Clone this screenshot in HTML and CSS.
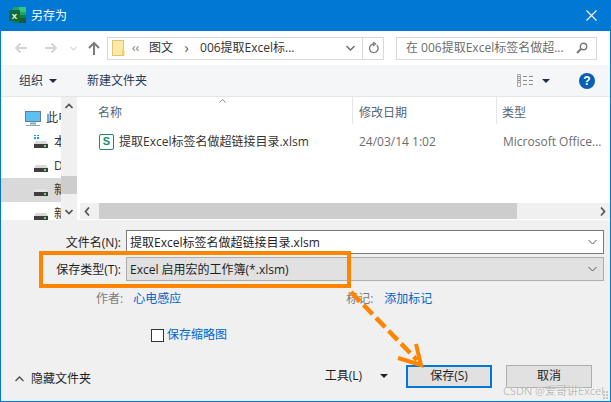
FILE: index.html
```html
<!DOCTYPE html>
<html lang="zh">
<head>
<meta charset="utf-8">
<title>另存为</title>
<link rel="stylesheet" href="styles.css">
</head>
<body>
<div class="window">
  <header class="titlebar">
    <svg class="xl" width="17" height="17" viewBox="0 0 17 17"><rect x="4" y="0" width="13" height="16" rx="1" fill="#21a366"/><rect x="10" y="0" width="7" height="5" fill="#33c481"/><rect x="4" y="8" width="13" height="8" fill="#107c41"/><rect x="10" y="11" width="7" height="5" fill="#185c37"/><rect x="0" y="3" width="11" height="11" rx="1" fill="#0f6b3a"/><text x="5.5" y="12" class="xl-x">X</text></svg>
    <span class="title">另存为</span>
    <svg class="close" width="11" height="11" viewBox="0 0 11 11"><path d="M.5.5l10 10M10.500.5l-10 10" stroke="#fff" stroke-width="1.100" fill="none"/></svg>
  </header>
  <nav class="navbar">
    <svg class="nav-ico" width="14" height="12" viewBox="0 0 14 12"><path d="M13 6H2M6.500 1.500L2 6l4.500 4.500" stroke="#d6d6d6" stroke-width="2" fill="none"/></svg>
    <svg class="nav-ico fwd" width="14" height="12" viewBox="0 0 14 12"><path d="M1 6h11M7.500 1.500L12 6l-4.500 4.500" stroke="#d6d6d6" stroke-width="2" fill="none"/></svg>
    <svg class="nav-ico dn" width="7" height="5" viewBox="0 0 7 5"><path d="M.5 1l3 3 3-3" stroke="#d6d6d6" stroke-width="1.200" fill="none"/></svg>
    <svg class="nav-ico up" width="12" height="14" viewBox="0 0 12 14"><path d="M6 14V2M1 7l5-5 5 5" stroke="#7d7d7d" stroke-width="2" fill="none"/></svg>
    <div class="address">
      <svg class="folder" width="13" height="16" viewBox="0 0 13 16"><rect x=".5" y=".5" width="11" height="15" fill="#ffe9a3" stroke="#e3c36f"/><rect x="10" y="10" width="2.500" height="5.500" fill="#f2cf72"/></svg>
      <span class="crumb-more">‹‹</span>
      <span class="crumb">图文</span>
      <span class="crumb-sep">›</span>
      <span class="crumb">006提取Excel标...</span>
      <svg class="addr-dd" width="9" height="6" viewBox="0 0 9 6"><path d="M.5 1l4 4 4-4" stroke="#666" stroke-width="1.300" fill="none"/></svg>
      <span class="refresh"><svg width="11" height="12" viewBox="0 0 11 12"><path d="M8.800 3.200a4.300 4.300 0 1 1-2.800-1.200M5 0l2.500 2L5 4" stroke="#777" stroke-width="1.300" fill="none"/></svg></span>
    </div>
    <div class="search">
      <span class="search-text">在 006提取Excel标签名做超...</span>
      <svg width="12" height="12" viewBox="0 0 12 12"><circle cx="7.500" cy="4.500" r="3.200" stroke="#777" stroke-width="1.400" fill="none"/><path d="M5 7l-4 4" stroke="#777" stroke-width="2"/></svg>
    </div>
  </nav>
  <div class="toolbar">
    <span class="tool-label">组织</span><i class="caret"></i>
    <span class="tool-label newfolder">新建文件夹</span>
    <span class="spacer"></span>
    <svg width="17" height="13" viewBox="0 0 17 13"><path d="M.5.500h3v12h-3zM.5 4.500h3M.5 8.500h3" stroke="#a9a9a9" fill="none"/><path d="M1 2.500h2" stroke="#6a8fc0"/><path d="M1 6.500h2" stroke="#c06a6a"/><path d="M6 2.500h4M12 2.500h4M6 6.500h4M12 6.500h4M6 10.500h4M12 10.500h4" stroke="#8d8d8d"/></svg>
    <i class="caret view-caret"></i>
    <span class="help">?</span>
  </div>
  <main class="main">
    <aside class="sidebar">
      <div class="tree">
        <div class="tree-row pc">
          <svg class="pc-ico" width="16" height="15" viewBox="0 0 16 15"><rect x=".5" y=".5" width="15" height="10" fill="#5cc0f0" stroke="#5d7f98"/><path d="M5 12.500h6" stroke="#8aa" stroke-width="2"/><path d="M1 14.500h14" stroke="#8ea3b3"/></svg>
          <span>此电脑</span>
        </div>
        <div class="tree-row drive"><svg class="drv-win" width="14" height="14" viewBox="0 0 14 14"><path d="M1 0h2v2H1zM4 0h2v2H4zM1 3h2v2H1zM4 3h2v2H4z" fill="#1e9de8" transform="translate(-1 -1)"/><path d="M2 6h10l2 3H0z" fill="#d9d9d9"/><rect y="9" width="14" height="4" fill="#3f3f3f"/><rect x="10" y="10" width="2" height="2" fill="#5fe05f"/></svg><span>本地磁盘</span></div>
        <div class="tree-row drive"><svg class="drv" width="14" height="8" viewBox="0 0 14 8"><path d="M2 0h10l2 3H0z" fill="#d9d9d9"/><rect y="3" width="14" height="4" fill="#3f3f3f"/><rect x="10" y="4" width="2" height="2" fill="#5fe05f"/></svg><span>D盘</span></div>
        <div class="tree-row drive selected"><svg class="drv" width="14" height="8" viewBox="0 0 14 8"><path d="M2 0h10l2 3H0z" fill="#e4e4e4"/><rect y="3" width="14" height="4" fill="#3f3f3f"/><rect x="10" y="4" width="2" height="2" fill="#5fe05f"/></svg><span>新加卷</span></div>
        <div class="tree-row drive"><svg class="drv" width="14" height="8" viewBox="0 0 14 8"><path d="M2 0h10l2 3H0z" fill="#d9d9d9"/><rect y="3" width="14" height="4" fill="#3f3f3f"/><rect x="10" y="4" width="2" height="2" fill="#5fe05f"/></svg><span>新加卷</span></div>
      </div>
      <div class="vscroll">
        <svg class="sb-arrow" width="8" height="6" viewBox="0 0 8 6"><path d="M.5 5L4 1.500 7.500 5" stroke="#555" stroke-width="1.700" fill="none"/></svg>
        <div class="vthumb"></div>
        <svg class="sb-arrow" width="8" height="6" viewBox="0 0 8 6"><path d="M.5 1L4 4.500 7.500 1" stroke="#555" stroke-width="1.700" fill="none"/></svg>
      </div>
    </aside>
    <section class="files">
      <div class="cols">
        <span class="col col-name">名称</span>
        <svg class="sort" width="7" height="4" viewBox="0 0 7 4"><path d="M.5 3.500l3-3 3 3" stroke="#888" fill="none"/></svg>
        <span class="col col-date">修改日期</span>
        <span class="col col-type">类型</span>
      </div>
      <div class="file-row">
        <span class="s-icon">S</span>
        <span class="f-name">提取Excel标签名做超链接目录.xlsm</span>
        <span class="f-date">24/03/14 1:02</span>
        <span class="f-type">Microsoft Office...</span>
      </div>
      <div class="hscroll">
        <svg width="6" height="9" viewBox="0 0 6 9"><path d="M5 .5L1.500 4.500 5 8.500" stroke="#555" stroke-width="1.700" fill="none"/></svg>
        <div class="hthumb"></div>
        <svg width="6" height="9" viewBox="0 0 6 9"><path d="M1 .5l3.500 4L1 8.500" stroke="#555" stroke-width="1.700" fill="none"/></svg>
      </div>
    </section>
  </main>
  <form class="panel">
    <div class="field">
      <label class="f-label">文件名(N):</label>
      <div class="input"><span class="val">提取Excel标签名做超链接目录.xlsm</span><svg width="9" height="6" viewBox="0 0 9 6"><path d="M.5 1l4 4 4-4" stroke="#555" fill="none"/></svg></div>
    </div>
    <div class="field">
      <label class="f-label">保存类型(T):</label>
      <div class="input select"><span class="val">Excel 启用宏的工作簿(*.xlsm)</span><svg width="9" height="6" viewBox="0 0 9 6"><path d="M.5 1l4 4 4-4" stroke="#555" fill="none"/></svg></div>
    </div>
    <div class="meta">
      <span class="m-key k1">作者:</span><a class="m-val">心电感应</a>
      <span class="m-key k2">标记:</span><a class="m-val">添加标记</a>
    </div>
    <div class="thumbopt"><i class="check"></i><a class="m-val">保存缩略图</a></div>
    <div class="actions">
      <svg width="9" height="6" viewBox="0 0 9 6"><path d="M.5 5l4-4 4 4" stroke="#555" stroke-width="1.500" fill="none"/></svg>
      <span class="hide">隐藏文件夹</span>
      <span class="spacer"></span>
      <span class="tools">工具(L)</span><i class="caret tools-caret"></i>
      <button type="button" class="btn primary">保存(S)</button>
      <button type="button" class="btn">取消</button>
    </div>
  </form>
</div>
<svg class="annot" width="611" height="402" viewBox="0 0 611 402">
  <rect x="41" y="253" width="308" height="33" fill="none" stroke="#ff8500" stroke-width="4"/>
  <path d="M351 292L417 360" stroke="#ff8500" stroke-width="4.500" stroke-dasharray="13 5" fill="none"/>
  <path d="M398 358l23 7-5-21" stroke="#ff8500" stroke-width="4" fill="none"/>
  <path d="M603 392h2M606 392h2M603 395h2M606 395h2M603 398h2M606 398h2" stroke="#c4c4c4" stroke-width="2"/>
</svg>
<span class="wm">CSDN @爱哥讲Excel</span>
</body>
</html>
```
FILE: styles.css
```css
* { box-sizing: border-box; }
html, body { margin: 0; padding: 0; }
body {
  position: relative;
  width: 611px;
  height: 402px;
  overflow: hidden;
  font: 12px/16px "Open Sans", "Noto Sans CJK SC", sans-serif;
  color: #1e1e1e;
}
.window {
  width: 611px;
  height: 402px;
  border: 1px solid #0078d7;
  border-top: 0;
  display: flex;
  flex-direction: column;
  background: #f0f0f0;
}
.spacer { flex: 1; }

.titlebar {
  height: 31px;
  flex: none;
  background: #0078d4;
  color: #fff;
  display: flex;
  align-items: center;
  padding: 0 13px 0 8px;
}
.xl { margin-right: 5px; }
.xl-x { font: bold 8px "Liberation Sans", sans-serif; fill: #fff; text-anchor: middle; }
.title { flex: 1; font-size: 12px; }

.navbar {
  height: 34px;
  flex: none;
  background: #fff;
  display: flex;
  align-items: center;
  padding: 0 13px 0 13px;
}
.nav-ico { flex: none; }
.fwd { margin-left: 16px; }
.dn { margin-left: 12px; }
.up { margin-left: 11px; margin-right: 7px; }
.address {
  width: 277px;
  height: 23px;
  border: 1px solid #d9d9d9;
  display: flex;
  align-items: center;
  padding-left: 4px;
  color: #333;
}
.folder { flex: none; margin-right: 7px; }
.crumb-more { width: 17px; color: #777; font-size: 12px; }
.crumb-sep { width: 27px; text-align: center; color: #555; font-size: 14px; }
.crumb { white-space: nowrap; }
.addr-dd { margin-left: auto; margin-right: 7px; }
.refresh {
  width: 21px;
  height: 21px;
  border-left: 1px solid #d9d9d9;
  display: flex;
  align-items: center;
  justify-content: center;
}
.search {
  width: 201px;
  height: 23px;
  margin-left: 12px;
  border: 1px solid #d9d9d9;
  display: flex;
  align-items: center;
  justify-content: space-between;
  padding: 0 8px 0 9px;
}
.search-text { color: #6d6d6d; white-space: nowrap; }

.toolbar {
  height: 32px;
  flex: none;
  background: #f5f6f7;
  border-bottom: 1px solid #e5e5e5;
  display: flex;
  align-items: center;
  padding: 0 15px 0 18px;
  color: #2b3a55;
}
.tool-label { white-space: nowrap; }
.caret {
  width: 0;
  height: 0;
  flex: none;
  border-left: 4px solid transparent;
  border-right: 4px solid transparent;
  border-top: 4px solid #1f2d4d;
  margin-left: 6px;
}
.newfolder { margin-left: 30px; }
.view-caret { margin-left: 8px; margin-right: 29px; }
.help {
  width: 16px;
  height: 16px;
  border-radius: 50%;
  background: #0a5fb4;
  color: #fff;
  font: bold 12px/16px "Liberation Sans", sans-serif;
  text-align: center;
}

.main {
  height: 123px;
  flex: none;
  display: flex;
  background: #fff;
}
.sidebar { width: 79px; flex: none; display: flex; }
.tree { width: 60px; overflow: hidden; padding-top: 9px; }
.tree-row {
  height: 24px;
  display: flex;
  align-items: center;
  white-space: nowrap;
  color: #333;
}
.tree-row span { flex: none; }
.pc { padding-left: 24px; gap: 5px; }
.pc-ico { flex: none; }
.drive { padding-left: 33px; gap: 6px; }
.drv { flex: none; margin-top: 6px; }
.drv-win { flex: none; }
.selected { background: #d9d9d9; }
.vscroll {
  width: 16px;
  background: #f0f0f0;
  display: flex;
  flex-direction: column;
  align-items: center;
  justify-content: space-between;
  position: relative;
  padding: 6px 0 5px;
}
.vthumb {
  position: absolute;
  left: 0;
  top: 79px;
  width: 16px;
  height: 18px;
  background: #cdcdcd;
}
.files { flex: 1; min-width: 0; display: flex; flex-direction: column; position: relative; }
.cols {
  height: 30px;
  flex: none;
  display: flex;
  align-items: center;
  position: relative;
  color: #54657a;
  padding-left: 18px;
}
.col { position: relative; height: 30px; line-height: 30px; }
.col-name { width: 254px; padding-top: 1px; }
.sort { position: absolute; left: 139px; top: 2px; }
.col-date, .col-type { border-left: 1px solid #e5e5e5; height: 27px; align-self: flex-start; line-height: 31px; }
.col-date { width: 144px; padding-left: 6px; }
.col-type { padding-left: 5px; }
.file-row {
  display: flex;
  align-items: center;
  height: 24px;
  margin-top: 3px;
  padding-left: 19px;
  white-space: nowrap;
  color: #333;
}
.s-icon {
  width: 15px;
  height: 16px;
  flex: none;
  border: 1.500px solid #1a8a6a;
  border-radius: 2px;
  color: #1a8a6a;
  font: bold 11px/13px "Liberation Sans", sans-serif;
  text-align: center;
  margin-right: 5px;
}
.f-name { width: 240px; }
.f-date { width: 144px; color: #6d6d6d; }
.f-type { color: #6d6d6d; }
.hscroll {
  margin-top: auto;
  height: 16px;
  background: #f0f0f0;
  display: flex;
  align-items: center;
  padding: 0 4px;
  margin-bottom: 1px;
}
.hthumb { width: 418px; height: 16px; background: #cdcdcd; margin: 0 auto 0 9px; }

.panel { flex: 1; display: flex; flex-direction: column; padding-top: 10px; }
.field {
  display: flex;
  align-items: center;
  height: 24px;
  margin-bottom: 3px;
  padding-right: 6px;
}
.f-label { width: 125px; padding: 1px 5px 0 0; text-align: right; white-space: nowrap; }
.input {
  flex: 1;
  height: 24px;
  background: #fff;
  border: 1px solid #7a7a7a;
  display: flex;
  align-items: center;
  justify-content: space-between;
  padding: 0 6px 0 3px;
  white-space: nowrap;
}
.val { padding-top: 1px; }
.select { background: #e1e1e1; border-color: #adadad; }
.meta {
  margin-top: 6px;
  height: 18px;
  display: flex;
  align-items: center;
  padding-left: 95px;
}
.m-key { color: #7c7c7c; }
.m-val { color: #0066cc; white-space: nowrap; }
.k1 { margin-right: 10px; }
.k2 { margin-left: 165px; margin-right: 11px; }
.thumbopt {
  margin-top: 19px;
  height: 16px;
  display: flex;
  align-items: center;
  gap: 3px;
  padding-left: 150px;
}
.check { width: 13px; height: 13px; background: #fff; border: 1px solid #333; flex: none; }
.actions {
  margin-top: 21px;
  height: 24px;
  display: flex;
  align-items: center;
  padding: 0 18px 0 14px;
}
.hide { margin-left: 7px; white-space: nowrap; padding-top: 6px; }
.actions > svg { margin-top: 6px; }
.tools { white-space: nowrap; }
.tools-caret { margin: 0 18px 0 18px; border-top-color: #222; }
.btn {
  width: 86px;
  height: 23px;
  background: #e1e1e1;
  border: 1px solid #adadad;
  font: inherit;
  color: #1e1e1e;
  padding: 0;
}
.primary { border: 2px solid #0078d7; margin-right: 14px; }

.annot { position: absolute; left: 0; top: 0; pointer-events: none; }
.wm {
  position: absolute;
  right: 7px;
  bottom: 4px;
  font-size: 11px;
  line-height: 14px;
  color: rgba(140, 140, 140, .6);
  text-shadow: 0 0 1px #fff;
  white-space: nowrap;
}
```
